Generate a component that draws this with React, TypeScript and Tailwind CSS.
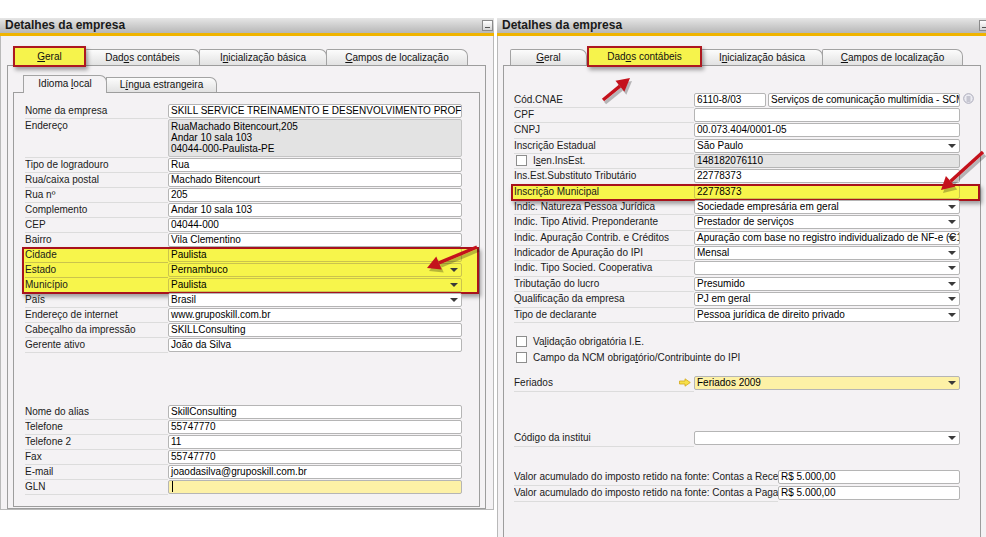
import React from "react";

const FONT = "font-['Liberation_Sans',Arial,sans-serif]";

function Dd() {
  return (
    <span className="absolute right-[3px] top-[4px] h-0 w-0 border-x-[4px] border-t-[4px] border-x-transparent border-t-[#3a3a3a]" />
  );
}

function Field({
  children,
  w,
  dd,
  bg = "bg-white",
  hl,
  className = "",
}: {
  children?: React.ReactNode;
  w: string;
  dd?: boolean;
  bg?: string;
  hl?: boolean;
  className?: string;
}) {
  return (
    <div
      className={`relative h-[14px] shrink-0 overflow-hidden whitespace-nowrap rounded-[2px] border px-[2px] text-[10px] leading-[12px] text-black ${
        hl ? "border-[#cbc44c] bg-transparent" : `border-[#b5b5b5] ${bg}`
      } ${w} ${className}`}
    >
      {children}
      {dd && <Dd />}
    </div>
  );
}

function Row({
  label,
  lw,
  hl,
  h = "h-[15px]",
  children,
}: {
  label: React.ReactNode;
  lw: string;
  hl?: boolean;
  h?: string;
  children?: React.ReactNode;
}) {
  return (
    <div className={`flex ${h}`}>
      <div
        className={`${lw} shrink-0 overflow-hidden whitespace-nowrap border-b text-[10px] leading-[14px] text-[#1a1a1a] ${
          hl ? "border-[#cbc44c]" : "border-[#dcdcdc]"
        }`}
      >
        {label}
      </div>
      {children}
    </div>
  );
}

function Highlight({ children }: { children: React.ReactNode }) {
  return (
    <div className="relative -ml-[3px] bg-[#f7f54b] pl-[3px]">
      {children}
      <div className="pointer-events-none absolute -inset-y-[1px] inset-x-0 border-2 border-[#a8121c] shadow-[2px_3px_4px_rgba(0,0,0,0.35)]" />
    </div>
  );
}

function Checkbox() {
  return <span className="h-[11px] w-[11px] shrink-0 border border-[#8d8d8d] bg-white" />;
}

function MinBtn() {
  return (
    <div className="relative h-[11px] w-[11px] shrink-0 border border-[#8a8a8a] bg-linear-to-b from-white to-[#d6d6d6]">
      <span className="absolute bottom-[2px] left-[2px] right-[2px] h-px bg-[#555]" />
    </div>
  );
}

function TitleBar() {
  return (
    <div className="flex h-[18px] flex-col">
      <div className="flex h-[15px] items-center justify-between bg-linear-to-b from-[#e6e6e6] to-[#b7b7b7] pl-[5px] pr-[1px]">
        <span className="text-[12px] font-bold leading-[15px] text-[#1a1a1a]">Detalhes da empresa</span>
        <MinBtn />
      </div>
      <div className="h-[3px] bg-[#f0b400]" />
    </div>
  );
}

function Tab({ w, active, children }: { w: string; active?: boolean; children: React.ReactNode }) {
  if (active) {
    return (
      <div
        className={`${w} relative z-10 -mb-[2px] h-[21px] shrink-0 border-2 border-[#ad1820] bg-[#f6f34c] text-center text-[10px] leading-[17px] text-[#111] shadow-[2px_3px_4px_rgba(0,0,0,0.35)]`}
      >
        {children}
      </div>
    );
  }
  return (
    <div
      className={`${w} -ml-px h-[16px] shrink-0 rounded-tl-[2px] rounded-tr-[7px] border border-b-0 border-[#a3a3a3] bg-linear-to-b from-[#fcfcfc] to-[#e2e2e2] text-center text-[10px] leading-[15px] text-[#111]`}
    >
      {children}
    </div>
  );
}

function Arrow({ x1, y1, x2, y2 }: { x1: number; y1: number; x2: number; y2: number }) {
  const dx = x2 - x1;
  const dy = y2 - y1;
  const len = Math.hypot(dx, dy);
  const ux = dx / len;
  const uy = dy / len;
  const hl = 13;
  const hw = 7;
  const bx = x2 - ux * hl;
  const by = y2 - uy * hl;
  const px = -uy;
  const py = ux;
  const pts = `${x2},${y2} ${bx + px * hw},${by + py * hw} ${bx - px * hw},${by - py * hw}`;
  return (
    <g>
      <g transform="translate(2 3)" opacity={0.25}>
        <line x1={x1} y1={y1} x2={bx} y2={by} stroke="#000" strokeWidth={3.5} />
        <polygon points={pts} fill="#000" />
      </g>
      <line x1={x1} y1={y1} x2={bx} y2={by} stroke="#c4121c" strokeWidth={3.5} />
      <polygon points={pts} fill="#c4121c" />
    </g>
  );
}

function LeftWindow() {
  const lw = "w-[143px]";
  const fw = "w-[294px]";
  return (
    <div className="flex w-[494px] shrink-0 flex-col">
      <TitleBar />
      <div className="h-[474px] border-x border-b border-[#b9b9b9] bg-[#f4f2f4] pl-[6px] pt-[13px]">
        <div className="flex h-[16px] items-end pl-[6px]">
          <Tab w="w-[73px]" active>
            <u>G</u>eral
          </Tab>
          <Tab w="w-[115px]">
            Dad<u>o</u>s contábeis
          </Tab>
          <Tab w="w-[128px]">
            I<u>n</u>icialização básica
          </Tab>
          <Tab w="w-[142px]">
            <u>C</u>ampos de localização
          </Tab>
        </div>
        <div className="h-[444px] w-[479px] border border-[#9d9d9d] pl-[5px] pt-[9px]">
          <div className="flex h-[17px] items-end pl-[10px]">
            <div className="relative z-10 -mb-px h-[18px] w-[84px] rounded-tr-[7px] border border-b-0 border-[#a3a3a3] bg-[#f4f2f4] text-center text-[10px] leading-[16px] text-[#111]">
              Idioma <u>l</u>ocal
            </div>
            <div className="-ml-px h-[15px] w-[111px] rounded-tr-[7px] border border-b-0 border-[#a3a3a3] bg-linear-to-b from-[#fcfcfc] to-[#e2e2e2] text-center text-[10px] leading-[14px] text-[#111]">
              L<u>í</u>ngua estrangeira
            </div>
          </div>
          <div className="h-[415px] w-[467px] border border-[#9d9d9d] pl-[11px] pt-[10.5px]">
            <Row label="Nome da empresa" lw={lw}>
              <Field w={fw}>SKILL SERVICE TREINAMENTO E DESENVOLVIMENTO PROFISSIONAL</Field>
            </Row>
            <Row label="Endereço" lw={lw} h="h-[39px]">
              <div className="h-[38px] w-[294px] shrink-0 rounded-[2px] border border-[#c4c4c4] bg-[#e3e3e3] px-[2px] pt-px text-[10px] leading-[11px] text-black">
                <div>RuaMachado Bitencourt,205</div>
                <div>Andar 10 sala 103</div>
                <div>04044-000-Paulista-PE</div>
              </div>
            </Row>
            <Row label="Tipo de logradouro" lw={lw}>
              <Field w={fw}>Rua</Field>
            </Row>
            <Row label="Rua/caixa postal" lw={lw}>
              <Field w={fw}>Machado Bitencourt</Field>
            </Row>
            <Row label="Rua nº" lw={lw}>
              <Field w={fw}>205</Field>
            </Row>
            <Row label="Complemento" lw={lw}>
              <Field w={fw}>Andar 10 sala 103</Field>
            </Row>
            <Row label="CEP" lw={lw}>
              <Field w={fw}>04044-000</Field>
            </Row>
            <Row label="Bairro" lw={lw}>
              <Field w={fw}>Vila Clementino</Field>
            </Row>
            <Highlight>
              <Row label="Cidade" lw={lw} hl>
                <Field w={fw} hl>
                  Paulista
                </Field>
              </Row>
              <Row label="Estado" lw={lw} hl>
                <Field w={fw} hl dd>
                  Pernambuco
                </Field>
              </Row>
              <Row label="Município" lw={lw} hl>
                <Field w={fw} hl dd>
                  Paulista
                </Field>
              </Row>
            </Highlight>
            <Row label="País" lw={lw}>
              <Field w={fw} dd>
                Brasil
              </Field>
            </Row>
            <Row label="Endereço de internet" lw={lw}>
              <Field w={fw}>www.gruposkill.com.br</Field>
            </Row>
            <Row label="Cabeçalho da impressão" lw={lw}>
              <Field w={fw}>SKILLConsulting</Field>
            </Row>
            <Row label="Gerente ativo" lw={lw}>
              <Field w={fw}>João da Silva</Field>
            </Row>
            <div className="h-[52px]" />
            <Row label="Nome do alias" lw={lw}>
              <Field w={fw}>SkillConsulting</Field>
            </Row>
            <Row label="Telefone" lw={lw}>
              <Field w={fw}>55747770</Field>
            </Row>
            <Row label="Telefone 2" lw={lw}>
              <Field w={fw}>11</Field>
            </Row>
            <Row label="Fax" lw={lw}>
              <Field w={fw}>55747770</Field>
            </Row>
            <Row label="E-mail" lw={lw}>
              <Field w={fw}>joaodasilva@gruposkill.com.br</Field>
            </Row>
            <Row label="GLN" lw={lw}>
              <Field w={fw} bg="bg-[#fdf1a6]">
                <span className="ml-[1px] inline-block h-[11px] w-px bg-black align-middle" />
              </Field>
            </Row>
          </div>
        </div>
      </div>
    </div>
  );
}

function RightWindow() {
  const lw = "w-[180px]";
  const fw = "w-[266px]";
  const rh = "h-[15.36px]";
  return (
    <div className="ml-[3px] flex w-[494px] shrink-0 flex-col">
      <TitleBar />
      <div className="h-[520px] border-l border-[#b9b9b9] bg-[#f4f2f4] pl-[5px] pt-[13px]">
        <div className="flex h-[16px] items-end pl-[8px]">
          <Tab w="w-[77px]">
            <u>G</u>eral
          </Tab>
          <Tab w="w-[115px]" active>
            Dad<u>o</u>s contábeis
          </Tab>
          <Tab w="w-[122px]">
            I<u>n</u>icialização básica
          </Tab>
          <Tab w="w-[141px]">
            <u>C</u>ampos de localização
          </Tab>
        </div>
        <div className="h-[480px] w-[478px] border border-[#9d9d9d] pl-[10px] pt-[26.5px]">
          <Row label="Cód.CNAE" lw={lw} h={rh}>
            <Field w="w-[72px]">6110-8/03</Field>
            <Field w="w-[192px]" className="ml-[2px]">
              Serviços de comunicação multimídia - SCM
            </Field>
            <svg width="11" height="11" viewBox="0 0 11 11" className="ml-[3px] shrink-0">
              <circle cx="5.5" cy="5.5" r="4.8" fill="#ececf2" stroke="#a9a9b8" />
              <line x1="3.5" y1="4" x2="7.5" y2="4" stroke="#a0a0b0" />
              <line x1="3.5" y1="6" x2="7.5" y2="6" stroke="#a0a0b0" />
              <line x1="3.5" y1="8" x2="7.5" y2="8" stroke="#a0a0b0" />
            </svg>
          </Row>
          <Row label="CPF" lw={lw} h={rh}>
            <Field w={fw} />
          </Row>
          <Row label="CNPJ" lw={lw} h={rh}>
            <Field w={fw}>00.073.404/0001-05</Field>
          </Row>
          <Row label="Inscrição Estadual" lw={lw} h={rh}>
            <Field w={fw} dd>
              São Paulo
            </Field>
          </Row>
          <Row
            label={
              <span className="ml-[2px] flex h-[14px] items-center gap-[6px]">
                <Checkbox />
                <span>
                  I<u>s</u>en.InsEst.
                </span>
              </span>
            }
            lw={lw}
            h={rh}
          >
            <Field w={fw} bg="bg-[#e4e4e4]">
              148182076110
            </Field>
          </Row>
          <Row label="Ins.Est.Substituto Tributário" lw={lw} h={rh}>
            <Field w={fw}>22778373</Field>
          </Row>
          <Highlight>
            <Row label="Inscrição Municipal" lw={lw} h={rh} hl>
              <Field w={fw} hl>
                22778373
              </Field>
            </Row>
          </Highlight>
          <Row label="Indic. Natureza Pessoa Jurídica" lw={lw} h={rh}>
            <Field w={fw} dd>
              Sociedade empresária em geral
            </Field>
          </Row>
          <Row label="Indic. Tipo Ativid. Preponderante" lw={lw} h={rh}>
            <Field w={fw} dd>
              Prestador de serviços
            </Field>
          </Row>
          <Row label="Indic. Apuração Contrib. e Créditos" lw={lw} h={rh}>
            <Field w={fw} dd>
              Apuração com base no registro individualizado de NF-e (C100 e C170)
            </Field>
          </Row>
          <Row label="Indicador de Apuração do IPI" lw={lw} h={rh}>
            <Field w={fw} dd>
              Mensal
            </Field>
          </Row>
          <Row label="Indic. Tipo Socied. Cooperativa" lw={lw} h={rh}>
            <Field w={fw} dd />
          </Row>
          <Row label="Tributação do lucro" lw={lw} h={rh}>
            <Field w={fw} dd>
              Presumido
            </Field>
          </Row>
          <Row label="Qualificação da empresa" lw={lw} h={rh}>
            <Field w={fw} dd>
              PJ em geral
            </Field>
          </Row>
          <Row label="Tipo de declarante" lw={lw} h={rh}>
            <Field w={fw} dd>
              Pessoa jurídica de direito privado
            </Field>
          </Row>

          <div className="ml-[2px] mt-[11px] flex h-[16px] items-center gap-[6px] text-[10px] text-[#1a1a1a]">
            <Checkbox />
            <span>
              Va<u>l</u>idação obrigatória I.E.
            </span>
          </div>
          <div className="ml-[2px] flex h-[16px] items-center gap-[6px] text-[10px] text-[#1a1a1a]">
            <Checkbox />
            <span>
              Campo da NCM obriga<u>t</u>ório/Contribuinte do IPI
            </span>
          </div>

          <div className="mt-[10px]">
            <Row
              label={
                <span className="flex items-center justify-between pr-[3px]">
                  <span>Feriados</span>
                  <svg width="12" height="9" viewBox="0 0 12 9">
                    <path d="M0.5 3 H6 V0.8 L11.3 4.5 L6 8.2 V6 H0.5 Z" fill="#f7e04a" stroke="#d3a81a" strokeWidth="0.8" />
                  </svg>
                </span>
              }
              lw={lw}
              h="h-[16px]"
            >
              <Field w={fw} dd bg="bg-[#fdf1a6]">
                Feriados 2009
              </Field>
            </Row>
          </div>

          <div className="mt-[39px]">
            <Row label="Código da institui" lw={lw} h="h-[16px]">
              <Field w={fw} dd />
            </Row>
          </div>

          <div className="mt-[23px]">
            <Row label="Valor acumulado do imposto retido na fonte: Contas a Receber" lw="w-[264px]" h="h-[16px]">
              <Field w="w-[182px]">R$ 5.000,00</Field>
            </Row>
            <Row label="Valor acumulado do imposto retido na fonte: Contas a Pagar" lw="w-[264px]" h="h-[16px]">
              <Field w="w-[182px]">R$ 5.000,00</Field>
            </Row>
          </div>
        </div>
      </div>
    </div>
  );
}

export default function App() {
  return (
    <div className={`relative flex h-[537px] w-[986px] items-start overflow-hidden bg-white pt-[18px] ${FONT}`}>
      <LeftWindow />
      <RightWindow />
      <svg className="pointer-events-none absolute left-0 top-0" width="986" height="537">
        <Arrow x1={477} y1={247} x2={427} y2={268} />
        <Arrow x1={603} y1={100} x2={630} y2={78} />
        <Arrow x1={983} y1={152} x2={941} y2={190} />
      </svg>
    </div>
  );
}
